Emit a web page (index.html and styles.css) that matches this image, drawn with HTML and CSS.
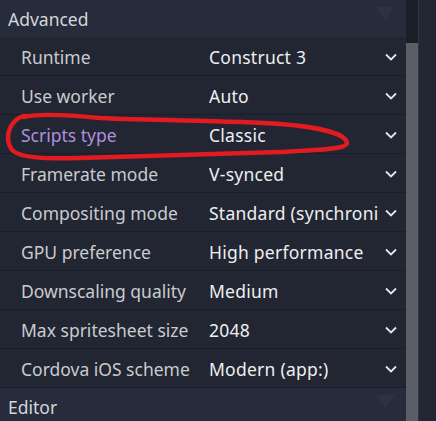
FILE: index.html
```html
<!DOCTYPE html>
<html>
<head>
<meta charset="utf-8">
<link rel="stylesheet" href="styles.css">
</head>
<body>
<div class="wrap">
  <div class="panel">
    <div class="section">
      <span class="sec-title">Advanced</span>
      <span class="tri"></span>
    </div>
    <div class="row"><span class="lbl">Runtime</span><span class="val">Construct 3</span><span class="chev"><svg viewBox="0 0 12 8" width="12" height="8"><path d="M1 1.5 L6 6.5 L11 1.5" fill="none" stroke="#e6e6e8" stroke-width="1.8"/></svg></span></div>
    <div class="row"><span class="lbl">Use worker</span><span class="val">Auto</span><span class="chev"><svg viewBox="0 0 12 8" width="12" height="8"><path d="M1 1.5 L6 6.5 L11 1.5" fill="none" stroke="#e6e6e8" stroke-width="1.8"/></svg></span></div>
    <div class="row"><span class="lbl hl">Scripts type</span><span class="val">Classic</span><span class="chev"><svg viewBox="0 0 12 8" width="12" height="8"><path d="M1 1.5 L6 6.5 L11 1.5" fill="none" stroke="#e6e6e8" stroke-width="1.8"/></svg></span></div>
    <div class="row"><span class="lbl">Framerate mode</span><span class="val">V-synced</span><span class="chev"><svg viewBox="0 0 12 8" width="12" height="8"><path d="M1 1.5 L6 6.5 L11 1.5" fill="none" stroke="#e6e6e8" stroke-width="1.8"/></svg></span></div>
    <div class="row"><span class="lbl">Compositing mode</span><span class="val">Standard (synchroni</span><span class="chev"><svg viewBox="0 0 12 8" width="12" height="8"><path d="M1 1.5 L6 6.5 L11 1.5" fill="none" stroke="#e6e6e8" stroke-width="1.8"/></svg></span></div>
    <div class="row"><span class="lbl">GPU preference</span><span class="val">High performance</span><span class="chev"><svg viewBox="0 0 12 8" width="12" height="8"><path d="M1 1.5 L6 6.5 L11 1.5" fill="none" stroke="#e6e6e8" stroke-width="1.8"/></svg></span></div>
    <div class="row"><span class="lbl">Downscaling quality</span><span class="val">Medium</span><span class="chev"><svg viewBox="0 0 12 8" width="12" height="8"><path d="M1 1.5 L6 6.5 L11 1.5" fill="none" stroke="#e6e6e8" stroke-width="1.8"/></svg></span></div>
    <div class="row"><span class="lbl">Max spritesheet size</span><span class="val">2048</span><span class="chev"><svg viewBox="0 0 12 8" width="12" height="8"><path d="M1 1.5 L6 6.5 L11 1.5" fill="none" stroke="#e6e6e8" stroke-width="1.8"/></svg></span></div>
    <div class="row"><span class="lbl">Cordova iOS scheme</span><span class="val">Modern (app:)</span><span class="chev"><svg viewBox="0 0 12 8" width="12" height="8"><path d="M1 1.5 L6 6.5 L11 1.5" fill="none" stroke="#e6e6e8" stroke-width="1.8"/></svg></span></div>
    <div class="section">
      <span class="sec-title">Editor</span>
      <span class="tri"></span>
    </div>
    <svg class="scribble" viewBox="0 0 406 421" width="406" height="421">
      <path d="M24 117 C 40 113, 70 115, 100 118 C 160 121, 230 120, 280 124 C 320 127, 346 134, 347 143 C 347 149, 320 150, 280 152 C 220 154, 150 156, 80 158 C 45 159, 20 158, 12 150 C 5 140, 8 128, 15 121 C 18 118, 22 116, 26 116" fill="none" stroke="#e11b1f" stroke-width="4.5" stroke-linecap="round" stroke-linejoin="round"/>
    </svg>
  </div>
  <div class="scrollbar"><div class="thumb"></div></div>
  <div class="side"></div>
</div>
</body>
</html>
```
FILE: styles.css
```css
html, body {
  margin: 0;
  padding: 0;
  background: #222733;
}
.wrap {
  display: flex;
  width: 436px;
  height: 421px;
  overflow: hidden;
  font-family: "Noto Sans", "Open Sans", sans-serif;
}
.panel {
  position: relative;
  width: 406px;
  flex: none;
  background: #212632;
}
.section {
  height: 37px;
  background: #262c3b;
  display: flex;
  align-items: center;
  justify-content: space-between;
  padding: 0 11px 0 8px;
  box-sizing: border-box;
}
.sec-title {
  color: #d4d6da;
  font-size: 17.5px;
}
.tri {
  width: 0;
  height: 0;
  border-left: 10px solid transparent;
  border-right: 10px solid transparent;
  border-top: 13px solid #2d3240;
  margin-top: -10px;
}
.row {
  display: flex;
  align-items: center;
  padding-left: 21px;
  padding-top: 1px;
  box-sizing: border-box;
  height: 39px;
  border-bottom: 1px solid #191d26;
}
.lbl {
  width: 188px;
  flex: none;
  color: #c9cbcf;
  font-size: 17.5px;
  white-space: nowrap;
}
.lbl.hl {
  color: #b08fdc;
}
.val {
  width: 170px;
  margin-right: 7px;
  flex: none;
  color: #eeeef0;
  font-size: 17.5px;
  letter-spacing: 0.25px;
  font-weight: 400;
  white-space: nowrap;
  overflow: hidden;
}
.chev {
  display: flex;
  align-items: center;
  margin-left: -1px;
}
.scribble {
  position: absolute;
  left: 0;
  top: 0;
  pointer-events: none;
}
.scrollbar {
  width: 12px;
  flex: none;
  background: #1a1e26;
  display: flex;
  flex-direction: column;
}
.thumb {
  margin-top: 43px;
  flex: 1;
  background: #5b5e66;
}
.side {
  flex: 1;
  border-left: 1px solid #2e3442;
  background: #222733;
}
```
